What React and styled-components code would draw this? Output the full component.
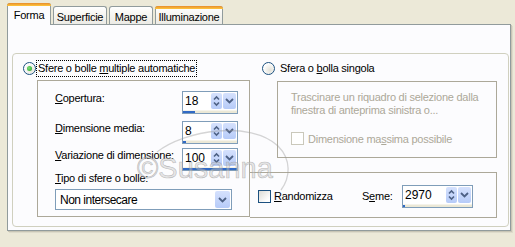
import React from 'react';
import styled, { createGlobalStyle } from 'styled-components';

const Global = createGlobalStyle`
  html, body {
    margin: 0;
    background: #ece9d8;
  }
  body {
    font-family: "Liberation Sans", Arial, sans-serif;
    font-size: 11px;
    letter-spacing: -0.25px;
    color: #000;
  }
`;

const Window = styled.div`
  position: relative;
  width: 515px;
  height: 247px;
  padding-left: 7px;
  box-sizing: border-box;
`;

const TabStrip = styled.div`
  display: flex;
  align-items: flex-end;
  height: 21px;
  padding-top: 3px;
`;

const Tab = styled.div`
  position: relative;
  box-sizing: border-box;
  width: ${(p) => p.$w}px;
  height: ${(p) => (p.$active ? 22 : 18)}px;
  margin-right: 2px;
  margin-bottom: ${(p) => (p.$active ? -1 : 0)}px;
  z-index: ${(p) => (p.$active ? 2 : 1)};
  border: 1px solid #919b9c;
  border-bottom: none;
  border-radius: 3px 3px 0 0;
  background: ${(p) => (p.$active ? '#fcfcfe' : 'linear-gradient(#ffffff, #f3f2ec 60%, #ecebe6)')};
  display: flex;
  align-items: center;
  justify-content: center;
  padding-top: ${(p) => (p.$active ? 1 : 2)}px;
  font-size: 11px;
  &::before {
    content: '';
    display: ${(p) => (p.$orange ? 'block' : 'none')};
    position: absolute;
    left: -1px;
    right: -1px;
    top: -1px;
    height: 3px;
    border-radius: 3px 3px 0 0;
    background: linear-gradient(#e68b2c, #ffc73c);
  }
`;

const Panel = styled.div`
  box-sizing: border-box;
  width: 504px;
  height: 207px;
  border: 1px solid #919b9c;
  background: #fcfcfe;
  box-shadow: 1px 1px 0 #c8c5b5, 2px 2px 0 #dedbcb;
  padding: 28px 1px 0 4px;
`;

const Group = styled.div`
  box-sizing: border-box;
  height: 174px;
  border: 1px solid #d0d0bf;
  border-radius: 4px;
  display: grid;
  grid-template-columns: 227px 247px;
  padding: 6px 0 0 10px;
`;

const Column = styled.div`
  display: flex;
  flex-direction: column;
  align-items: flex-start;
`;

const RadioRow = styled.div`
  display: flex;
  align-items: center;
  height: 17px;
  padding-left: ${(p) => p.$pad || 0}px;
`;

const Radio = styled.span`
  box-sizing: border-box;
  width: 13px;
  height: 13px;
  border-radius: 50%;
  border: 1px solid #1c5180;
  background: radial-gradient(circle at 65% 65%, #e3e2d9, #ffffff 70%);
  display: flex;
  align-items: center;
  justify-content: center;
  flex: none;
  &::after {
    content: '';
    display: ${(p) => (p.$checked ? 'block' : 'none')};
    width: 5px;
    height: 5px;
    border-radius: 50%;
    background: radial-gradient(circle at 40% 40%, #7fe07a, #21a121);
  }
`;

const RadioLabel = styled.span`
  margin-left: ${(p) => (p.$focus ? 0 : 3)}px;
  padding: 0 1px;
  line-height: 15px;
  border: 1px dotted ${(p) => (p.$focus ? '#000' : 'transparent')};
`;

const Key = styled.span`
  text-decoration: underline;
`;

const LeftBox = styled.div`
  box-sizing: border-box;
  width: 213px;
  height: 137px;
  margin: 3px 0 0 14px;
  border: 1px solid #aca899;
  padding: 10px 0 0 17px;
  display: flex;
  flex-direction: column;
`;

const FieldRow = styled.div`
  display: flex;
  align-items: flex-start;
  margin-top: ${(p) => p.$mt || 0}px;
`;

const FieldLabel = styled.div`
  width: 127px;
  line-height: 13px;
  padding-top: 1px;
`;

const SpinBox = styled.div`
  box-sizing: border-box;
  width: ${(p) => p.$w}px;
  height: 23px;
  border: 1px solid #7f9db9;
  background: #fff;
  display: flex;
  flex-direction: column;
`;

const SpinTop = styled.div`
  display: flex;
  height: 17px;
  padding: 1px 1px 0 0;
  gap: 1px;
`;

const SpinEdit = styled.div`
  flex: 1;
  font-size: 12px;
  letter-spacing: 0;
  line-height: 16px;
  padding-left: 2px;
`;

const SpinBtn = styled.div`
  box-sizing: border-box;
  width: ${(p) => p.$w}px;
  height: 16px;
  border-radius: 2px;
  background: linear-gradient(#d5e1fd, #b6cbf8);
  display: flex;
  align-items: center;
  justify-content: center;
`;

const SpinTrack = styled.div`
  flex: 1;
  background: #ebe8d6;
  border-top: 1px solid #f5f3ea;
  display: flex;
`;

const SpinFill = styled.div`
  background: #316ac5;
  height: 100%;
`;

const TypeLabel = styled.div`
  line-height: 13px;
  margin-top: 1px;
`;

const Combo = styled.div`
  box-sizing: border-box;
  width: 177px;
  height: 21px;
  margin-top: 4px;
  border: 1px solid #7f9db9;
  background: #fff;
  display: flex;
  align-items: center;
  justify-content: space-between;
  padding: 1px;
`;

const ComboText = styled.span`
  font-size: 12px;
  letter-spacing: -0.5px;
  padding-left: 3px;
`;

const ComboBtn = styled(SpinBtn)`
  width: 15px;
  height: 17px;
`;

const RightBox = styled.div`
  box-sizing: border-box;
  width: 220px;
  height: 77px;
  margin: 4px 0 0 27px;
  border: 1px solid #aca899;
  padding: 9px 0 0 13px;
  color: #aca899;
`;

const HintText = styled.div`
  line-height: 13px;
`;

const CheckRow = styled.div`
  display: flex;
  align-items: center;
  margin-top: ${(p) => p.$mt || 0}px;
`;

const Check = styled.span`
  box-sizing: border-box;
  width: 13px;
  height: 13px;
  flex: none;
  border: 1px solid ${(p) => (p.$disabled ? '#cac8bb' : '#1c5180')};
  background: ${(p) => (p.$disabled ? '#fff' : 'linear-gradient(135deg, #dcdbd5, #ffffff 80%)')};
`;

const CheckLabel = styled.span`
  margin-left: ${(p) => p.$gap}px;
`;

const BottomBox = styled.div`
  box-sizing: border-box;
  width: 247px;
  height: 46px;
  margin-top: 14px;
  border: 1px solid #aca899;
  border-left: none;
  padding: 2px 23px 0 8px;
  display: flex;
  align-items: center;
`;

const SeedLabel = styled.span`
  margin-left: auto;
  width: 40px;
`;

const Watermark = styled.div`
  position: absolute;
  left: 137px;
  top: 152px;
  font-size: 29px;
  letter-spacing: 0;
  font-family: "Liberation Sans", Arial, sans-serif;
  color: rgba(200, 200, 200, 0.45);
  -webkit-text-stroke: 0.6px rgba(140, 140, 140, 0.55);
  pointer-events: none;
`;

const Arc = styled.svg`
  position: absolute;
  left: 0;
  top: 0;
  pointer-events: none;
`;

const UpDownIcon = () => (
  <svg width="7" height="12" viewBox="0 0 7 12">
    <path d="M1 4.5 L3.5 2 L6 4.5" fill="none" stroke="#4d6185" strokeWidth="1.6" />
    <path d="M1 7.5 L3.5 10 L6 7.5" fill="none" stroke="#4d6185" strokeWidth="1.6" />
  </svg>
);

const DownIcon = () => (
  <svg width="9" height="6" viewBox="0 0 9 6">
    <path d="M1 1 L4.5 4.5 L8 1" fill="none" stroke="#4d6185" strokeWidth="1.8" />
  </svg>
);

const Spinner = ({ value, fill, w = 56 }) => (
  <SpinBox $w={w}>
    <SpinTop>
      <SpinEdit>{value}</SpinEdit>
      <SpinBtn $w={11}>
        <UpDownIcon />
      </SpinBtn>
      <SpinBtn $w={13}>
        <DownIcon />
      </SpinBtn>
    </SpinTop>
    <SpinTrack>
      <SpinFill style={{ width: `${fill * 100}%` }} />
    </SpinTrack>
  </SpinBox>
);

export default function App() {
  return (
    <Window>
      <Global />
      <TabStrip>
        <Tab $w={44} $active $orange>Forma</Tab>
        <Tab $w={54}>Superficie</Tab>
        <Tab $w={44}>Mappe</Tab>
        <Tab $w={68} $orange>Illuminazione</Tab>
      </TabStrip>
      <Panel>
        <Group>
          <Column>
            <RadioRow>
              <Radio $checked />
              <RadioLabel $focus>
                Sfere o bolle <Key>m</Key>ultiple automatiche
              </RadioLabel>
            </RadioRow>
            <LeftBox>
              <FieldRow>
                <FieldLabel><Key>C</Key>opertura:</FieldLabel>
                <Spinner value="18" fill={0.22} />
              </FieldRow>
              <FieldRow $mt={7}>
                <FieldLabel><Key>D</Key>imensione media:</FieldLabel>
                <Spinner value="8" fill={0.06} />
              </FieldRow>
              <FieldRow $mt={4}>
                <FieldLabel><Key>V</Key>ariazione di dimensione:</FieldLabel>
                <Spinner value="100" fill={1} />
              </FieldRow>
              <TypeLabel><Key>T</Key>ipo di sfere o bolle:</TypeLabel>
              <Combo>
                <ComboText>Non intersecare</ComboText>
                <ComboBtn>
                  <DownIcon />
                </ComboBtn>
              </Combo>
            </LeftBox>
          </Column>
          <Column>
            <RadioRow $pad={12}>
              <Radio />
              <RadioLabel>
                Sfera o <Key>b</Key>olla singola
              </RadioLabel>
            </RadioRow>
            <RightBox>
              <HintText>Trascinare un riquadro di selezione dalla</HintText>
              <HintText>finestra di anteprima sinistra o...</HintText>
              <CheckRow $mt={15}>
                <Check $disabled />
                <CheckLabel $gap={4}>Dimensione ma<Key>s</Key>sima possibile</CheckLabel>
              </CheckRow>
            </RightBox>
            <BottomBox>
              <Check />
              <CheckLabel $gap={3}><Key>R</Key>andomizza</CheckLabel>
              <SeedLabel>S<Key>e</Key>me:</SeedLabel>
              <Spinner value="2970" fill={0.03} w={71} />
            </BottomBox>
          </Column>
        </Group>
      </Panel>
      <Watermark>©Susanna</Watermark>
      <Arc width="515" height="247">
        <path
          d="M157 152 C 185 130, 250 120, 278 146 C 292 160, 290 178, 281 190"
          fill="none"
          stroke="rgba(150,150,150,0.4)"
          strokeWidth="1.3"
        />
      </Arc>
    </Window>
  );
}
